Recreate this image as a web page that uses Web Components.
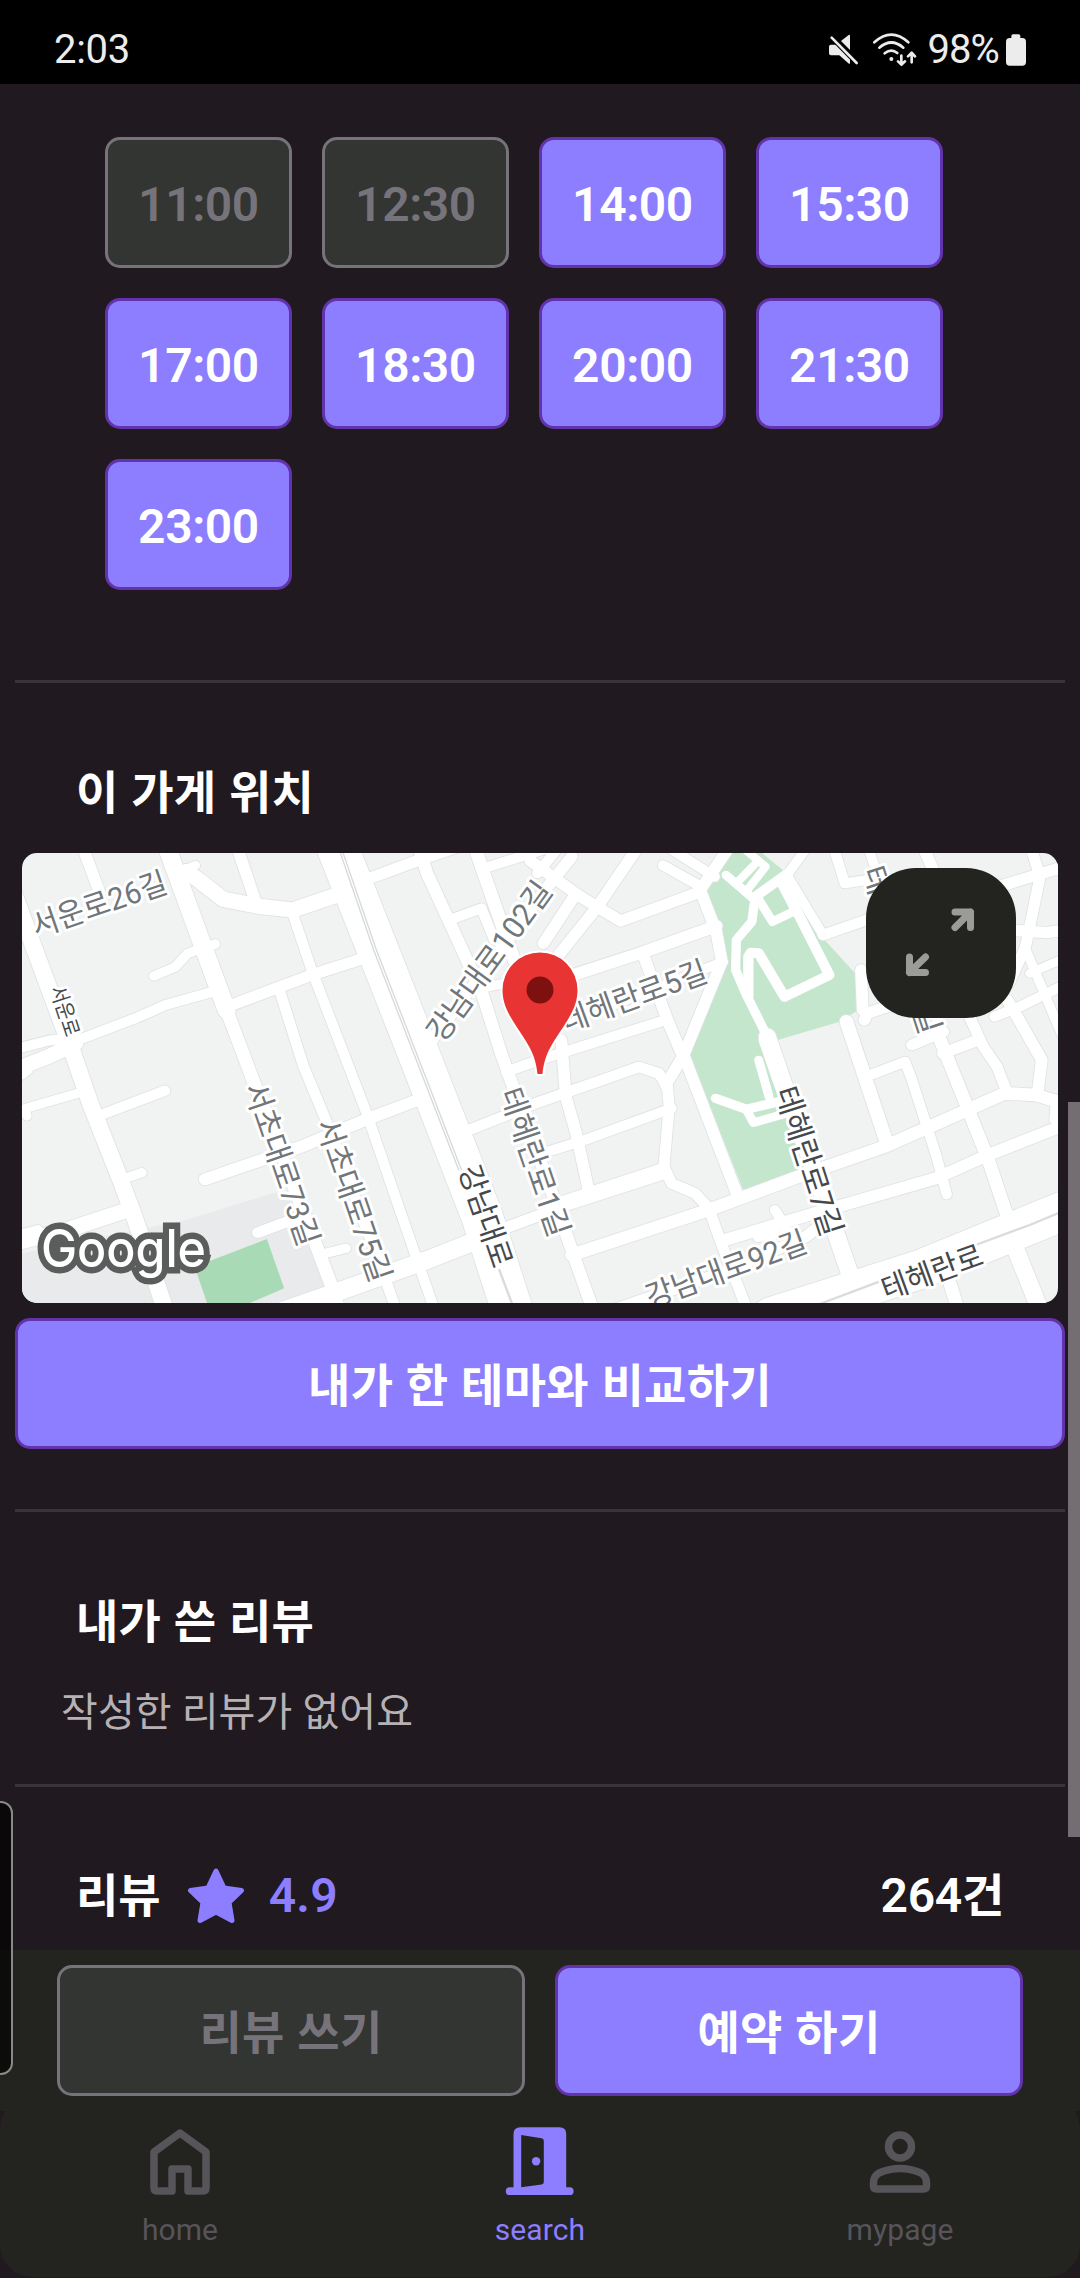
<!DOCTYPE html>
<html lang="ko">
<head>
<meta charset="utf-8">
<title>예약</title>
<style>
html,body{margin:0;padding:0;background:#20191f}
body{width:1080px;height:2278px;overflow:hidden;font-family:Roboto,"Noto Sans CJK KR",sans-serif}
</style>
</head>
<body>
<app-screen></app-screen>
<script>
const define = (name, html, init) => customElements.define(name, class extends HTMLElement {
  constructor() {
    super();
    this.attachShadow({ mode: 'open' }).innerHTML = html;
  }
  connectedCallback() { if (init) init(this, this.shadowRoot); }
});

define('status-bar', `
<style>
:host{display:flex;align-items:center;justify-content:space-between;height:84px;flex:none;box-sizing:border-box;padding:15px 54px 0 54px;background:#000;color:#ececec;font-size:40px;line-height:48px}
.r{display:flex;align-items:center}
.time{letter-spacing:-.3px}
svg{display:block;overflow:visible}
.pct{letter-spacing:-.9px;margin:0 7px 0 9px}
</style>
<span class="time">2:03</span>
<div class="r">
<svg width="30" height="32" viewBox="148 102 90 96"><g fill="#ececec"><path d="M184 123L207 105Q211 103 211 108V150Z"/><path d="M154 134H172L211 172V188Q211 194 206 190L179 166H154Q148 166 148 160V140Q148 134 154 134Z"/></g><path d="M156 113L231 189" stroke="#000" stroke-width="14"/><path d="M156 113L231 189" stroke="#ececec" stroke-width="8" stroke-linecap="round"/></svg>
<svg style="margin-left:13px" width="46" height="34" viewBox="276 98 138 102" fill="none" stroke="#ececec" stroke-width="8" stroke-linecap="round" stroke-linejoin="round"><path d="M283 126Q334 80 385 126M298 142Q334 111 370 142M314 159Q334 143 352 158M364 166V192M354 183L364 193L375 183M395 186V158M384 168L395 157L405 168"/><circle cx="334" cy="176" r="6" fill="#ececec" stroke="none"/></svg>
<span class="pct">98%</span>
<svg width="20" height="32" viewBox="678 103 60 96" fill="#ececec"><rect x="678" y="115" width="60" height="83" rx="11"/><rect x="694" y="104" width="27" height="20" rx="5"/></svg>
</div>`);

define('app-button', `
<style>
:host{display:flex;align-items:center;justify-content:center;box-sizing:border-box;height:131px;padding-top:4px;border:3px solid #6233ab;border-radius:15px;background:#8c7eff;color:#fff;font-size:46px;font-weight:600;line-height:1;letter-spacing:.3px;word-spacing:.8px}
:host([disabled]){background:#333532;border-color:#77737b;color:#77737b}
:host([time]){width:187px;font-size:48px;font-weight:600;letter-spacing:-.4px;padding-top:4px}
</style><slot></slot>`);

define('time-grid', `
<style>
:host{display:grid;grid-template-columns:repeat(4,187px);gap:30px;padding:53px 0 0 105px}
</style><slot></slot>`);

define('section-rule', `<style>:host{display:block;height:3px;flex:none;margin:0 15px;background:#373535}</style>`);

define('section-title', `
<style>:host{display:flex;align-items:center;color:#fff;font-size:46px;font-weight:600;line-height:60px;height:60px;padding-left:76px;letter-spacing:.3px;word-spacing:.8px}</style><slot></slot>`);

define('review-summary', `
<style>
:host{display:flex;align-items:center;height:60px;padding:0 76px;color:#fff;font-size:46px;font-weight:600;line-height:60px}
svg{display:block;margin:-1px 24px 0 26px}
.score{color:#8c7eff;font-size:48px;letter-spacing:.3px}
.count{margin-left:auto;font-size:48px;letter-spacing:-.3px}
.count span{font-size:46px}
</style>
<span>리뷰</span>
<svg width="58" height="56" viewBox="0 0 58 56"><path d="M29 3L37 20L54.500 22.500L42 34.500L45 52.500L29 44L13 52.500L16 34.500L3.500 22.500L21 20Z" fill="#8c7eff" stroke="#8c7eff" stroke-width="5" stroke-linejoin="round"/></svg>
<span class="score">4.9</span>
<span class="count">264<span>건</span></span>`);

/* Street network: [stroke width, path]. Right half coordinates are shifted by 1568. */
const W = [
 [48,'M40 160L130 410L200 605L262 790L350 1020L390 1130L480 1410'],
 [34,'M240 20L290 160'],
 [52,'M484 20L590 320L658 510'],[38,'M658 510L740 735L905 1180L960 1330L985 1410'],
 [46,'M540 95L570 115L648 178L760 200L850 210L985 163'],[26,'M520 95L568 76'],
 [34,'M688 20L742 185'],[30,'M848 215L905 390L1063 815L1206 1245L1262 1410'],
 [28,'M447 408L510 380L545 340L625 312'],
 [30,'M40 628L150 600L240 595L400 532L480 495L630 452'],[34,'M655 502L905 405L1055 355'],
 [44,'M40 690L140 650L220 610'],[30,'M60 705L80 690'],
 [27,'M78 828L72 806L235 757'],[31,'M285 828L479 752'],[28,'M355 1018L412 998'],
 [31,'M813 455L880 675L950 850L1125 1335L1150 1410'],
 [36,'M595 1018L880 918L1065 838L1205 783'],[32,'M748 1178L860 1135'],[28,'M925 1245L1005 1225'],
 [46,'M370 1110L200 1168L40 1210'],[26,'M50 1185L110 1168'],
 [54,'M800 1420L985 1354L1240 1260L1400 1195'],[34,'M1400 1190L1660 1090L1930 1000'],
 [120,'M975 10L1200 600L1400 1130L1490 1420'],
 [34,'M1060 120L1230 55L1330 20'],[36,'M1215 20L1240 100L1315 268L1400 460L1455 640L1500 770L1600 1050L1660 1230L1722 1410'],
 [38,'M1378 20L1430 175L1500 380'],[30,'M1410 83L1580 28'],[30,'M1310 238L1398 205L1435 300'],[28,'M1395 445L1490 425'],
 [34,'M1240 620L1590 140L1660 50'],[34,'M1578 310L1670 165'],[34,'M1618 350L1735 200L1850 25'],
 [34,'M1540 62L1678 165L1738 203L1802 243L2035 155'],[30,'M1560 100L1620 25'],
 [31,'M1470 695L1580 655L1918 545'],
 [32,'M1350 875L1568 785L1748 720L1855 681L1913 700L1938 740L1943 800L1928 980L1950 1030L2018 1060L2058 1105L2098 1220L2170 1410'],
 [30,'M1925 76L2035 140'],[30,'M1945 25L2075 110'],
 [34,'M2115 25L2033 150L2080 275L2096 365L1983 650L1933 735'],
 [34,'M1983 640L2143 1070'],[36,'M1670 403L1858 340L2080 258'],[34,'M1868 345L1938 540L1983 650'],[28,'M1720 520L2100 365'],
 [34,'M1630 600L1643 770L1673 880L1708 1045'],[30,'M1590 935L1698 900L1950 805'],
 [32,'M1600 1095L1925 985'],[38,'M1660 1245L2058 1110L2318 1010L2568 920L2678 870L2918 760L3008 765L3090 790'],
 [36,'M2098 1202L2348 1125L2718 1015L2858 950L3090 855'],
 [50,'M2228 590L2308 830L2368 1000L2490 1370'],
 [34,'M1780 1410L2120 1290L2340 1190L2420 1125'],[26,'M2200 1193L2270 1183'],[30,'M2250 1110L2310 1210'],
 [116,'M2240 1430L2668 1290L3090 1112'],[38,'M2760 1335L2782 1410'],[50,'M2950 1230L3020 1410'],
 [40,'M2458 545L2572 900'],[34,'M2510 540L2518 520L2590 495M2500 390L2505 510'],
 [30,'M2535 702L2628 665L2648 720L2718 945L2749 1063'],[32,'M2647 615L2740 575'],[34,'M2738 640L2840 600'],
 [38,'M2715 560L2808 800L2870 960L2925 1130'],[32,'M2815 530L2855 620L2895 680L2925 760'],
 [34,'M2925 480L2970 560L3025 660L3013 760'],[30,'M2888 530L2960 500L3080 440'],
 [28,'M2975 320L3090 600'],[32,'M2993 20L3020 110L2978 320L2930 430'],[34,'M3090 80L2900 140'],
 [34,'M2930 270L3040 278L3090 270'],[26,'M2990 400L3090 355'],
 [28,'M2345 20L2285 105L2390 285'],[32,'M2390 285L2530 235'],[30,'M2420 20L2453 130L2530 118'],[28,'M2520 20L2550 110'],[34,'M2680 20L2710 90'],[26,'M3064 790L3060 840']
];
const P = [
 [26,'M2108 105L2198 185'],[24,'M2165 30L2223 80L2170 150M2138 130L2190 75'],
 [30,'M2288 100L2193 170'],[27,'M2193 170L2183 245L2138 300L2136 390L2165 460L2228 590'],
 [26,'M2198 170L2243 245L2310 212L2268 130'],
 [30,'M2268 120L2408 405L2278 470L2203 340L2180 338L2173 350V470'],
 [26,'M2203 660L2233 770'],[28,'M2078 775L2168 808L2260 785'],[26,'M2168 810L2188 848L2300 815'],[50,'M2228 600L2275 740']
];
/* Street names: text, centre x, centre y, angle, length, size, major road */
const L = [
 ['서운로26길',99,904,-19,141,31,0],['서운로',65,1011,72,52,21,1],['서초대로73길',282,1164,71,170,31,0],
 ['서초대로75길',354,1200,71,170,31,0],['강남대로',486,1216,71,106,30,1],['강남대로102길',489,961,-54,189,31,0],
 ['테헤란로5길',634,996,-20,153,31,0],['테헤란로1길',535,1162,71,155,31,0],['테헤란로7길',809,1161,72,155,31,1],
 ['강남대로92길',726,1269,-20,169,31,0],['테헤란로',932,1272,-20,106,30,1],['테',877,880,72,28,31,0],['길',927,1019,72,28,31,0]
];
const line = (c, extra) => r => `<path d="${r[1]}" stroke="${c}" stroke-width="${r[0] + extra}"/>`;

define('store-map', `
<style>
:host{display:block;position:relative;height:450px;margin:0 22px;border-radius:15px;overflow:hidden;background:#f0f3f2}
svg{display:block}
text{font-family:Roboto,"Noto Sans CJK KR",sans-serif;text-anchor:middle;stroke:#fff;stroke-width:6px;stroke-linejoin:round;paint-order:stroke}
.logo{font-family:Inter,sans-serif;font-weight:550;text-anchor:start;fill:#fff;stroke:#5b5c5c;stroke-width:13px;stroke-linejoin:miter;stroke-miterlimit:2}
expand-button{position:absolute;left:844px;top:15px}
</style>
<svg width="1036" height="450" viewBox="22 853 1036 450">
<g transform="matrix(.34439 0 0 .33333 0 840)" fill="none" stroke-linecap="round" stroke-linejoin="round">
<path fill="#e8eaeb" d="M40 1245L350 1180L540 1140L790 1060L860 1050L990 1410H40Z"/>
<path fill="#a8dab5" d="M565 1280L775 1197L825 1345L700 1400H605Z"/>
<path fill="#c3e6cc" d="M2110 20H2190L2273 90L2290 130L2390 295L2483 400L2493 510L2438 545L2258 600L2308 830L2355 980L2158 1050L2003 645L2113 370L2043 150Z"/>
${W.map(line('#dfe2e4', 5)).join('')}${W.map(line('#fff', 0)).join('')}${P.map(line('#fff', 0)).join('')}
<path stroke="#d6dadd" stroke-width="4" d="M982 20L1085 330L1220 690L1332 990M990 20L1093 330L1228 690L1340 990"/>
<path stroke="#d9dbdd" stroke-width="7" d="M1450 1290L1490 1400M2380 1392L2553 1325M2833 1215L2990 1155L3090 1112"/>
</g>
${L.map(l => `<text transform="translate(${l[1]} ${l[2]}) rotate(${l[3]})" y="${l[5] * .36}" font-size="${l[5]}" textLength="${l[4]}" lengthAdjust="spacingAndGlyphs" fill="${l[6] ? '#45494c' : '#70767a'}">${l[0]}</text>`).join('')}
<path d="M502.500 990a37.500 37.500 0 0 1 75 0c0 14-6 24-13 35c-10 16-20 27-22 49h-5c-2-22-12-33-22-49c-7-11-13-21-13-35z" fill="#e93434" stroke="#fff" stroke-width="4" paint-order="stroke"/>
<circle cx="540" cy="990" r="13.500" fill="#7f1010"/>
<text class="logo" x="41" y="1267" font-size="52" textLength="165" lengthAdjust="spacingAndGlyphs">Google</text>
</svg>
<expand-button></expand-button>`);

define('expand-button', `
<style>:host{display:block;width:150px;height:150px;border-radius:50px;background:#232320}svg{display:block}</style>
<svg width="150" height="150" viewBox="866 868 150 150" fill="none" stroke="#9b9b98" stroke-width="7" stroke-linecap="round" stroke-linejoin="round"><path d="M955 912H970.500V927.500M970.500 912L955 927.500M909.500 957V972.500H925.500M909.500 972.500L925.500 957"/></svg>`);

define('action-bar', `
<style>:host{display:flex;gap:30px;height:161px;box-sizing:border-box;padding:15px 57px;background:#232320;position:relative;z-index:1}::slotted(*){flex:1}</style><slot></slot>`);

define('nav-item', `
<style>:host{flex:1;display:flex;flex-direction:column;align-items:center;color:#57545a;font-size:30px;line-height:36px;letter-spacing:.1px}
:host([active]){color:#8c7eff}::slotted(svg){display:block;margin-bottom:11px}</style>
<slot name="icon"></slot><slot></slot>`);

define('nav-bar', `
<style>:host{display:flex;height:180px;box-sizing:border-box;padding-top:24px;margin-top:-14px;border-radius:32px;background:#232320}</style>
<nav-item><svg slot="icon" width="80" height="80" viewBox="140 2121 80 80" fill="none" stroke="currentColor" stroke-width="7.500" stroke-linejoin="round"><path d="M154 2152L180 2133L206 2152V2188Q206 2191 203 2191H188V2169H172V2191H157Q154 2191 154 2188Z"/></svg>home</nav-item>
<nav-item active><svg slot="icon" width="80" height="80" viewBox="499.500 2121 80 80"><path fill="currentColor" fill-rule="evenodd" d="M520 2127.300H559Q565.700 2127.300 565.700 2134V2187.300H569.200a3.900 3.900 0 0 1 0 7.800H509.200a3.900 3.900 0 0 1 0-7.800H513V2134Q513 2127.300 520 2127.300ZM520.700 2135V2187.300L541 2184.500Q543.300 2184 543.300 2182V2141Q543.300 2138.500 541 2138.200Z"/><circle cx="535.600" cy="2161.300" r="4.200" fill="currentColor"/></svg>search</nav-item>
<nav-item><svg slot="icon" width="80" height="80" viewBox="860 2121 80 80" fill="none" stroke="currentColor" stroke-width="7.500" stroke-linejoin="round"><circle cx="900" cy="2146.500" r="11.500"/><path d="M873.500 2183Q873.500 2176 879 2173Q900 2164 921 2173Q926.500 2176 926.500 2183V2186Q926.500 2189 923.500 2189H876.500Q873.500 2189 873.500 2186Z"/></svg>mypage</nav-item>`);

define('app-screen', `
<style>
:host{display:flex;flex-direction:column;position:relative;width:1080px;height:2278px;background:#20191f;overflow:hidden}
main{display:flex;flex-direction:column;flex:none;height:1866px}
.times{height:596px}
.loc{margin:80px 0 30px}
.cmp{margin:15px 15px 60px}
.mine{margin:80px 0 30px}
.empty{color:#b6b1b5;font-size:40px;line-height:62px;height:60px;padding-left:61px;margin-bottom:42px;letter-spacing:.1px}
review-summary{margin-top:79px}
.scroll{position:absolute;right:0;top:1102px;width:12px;height:735px;background:#746e73}
.edge{position:absolute;z-index:2;left:-16px;top:1801px;width:29px;height:274px;box-sizing:border-box;border:2px solid #8a8988;border-radius:12px;background:rgba(0,0,0,.65)}
</style>
<status-bar></status-bar>
<main>
<div class="times"><time-grid>
<app-button time disabled>11:00</app-button><app-button time disabled>12:30</app-button><app-button time>14:00</app-button><app-button time>15:30</app-button>
<app-button time>17:00</app-button><app-button time>18:30</app-button><app-button time>20:00</app-button><app-button time>21:30</app-button><app-button time>23:00</app-button>
</time-grid></div>
<section-rule></section-rule>
<section-title class="loc">이 가게 위치</section-title>
<store-map></store-map>
<app-button class="cmp">내가 한 테마와 비교하기</app-button>
<section-rule></section-rule>
<section-title class="mine">내가 쓴 리뷰</section-title>
<div class="empty">작성한 리뷰가 없어요</div>
<section-rule></section-rule>
<review-summary></review-summary>
</main>
<action-bar><app-button disabled>리뷰 쓰기</app-button><app-button>예약 하기</app-button></action-bar>
<nav-bar></nav-bar>
<div class="scroll"></div><div class="edge"></div>`);
</script>
</body>
</html>
